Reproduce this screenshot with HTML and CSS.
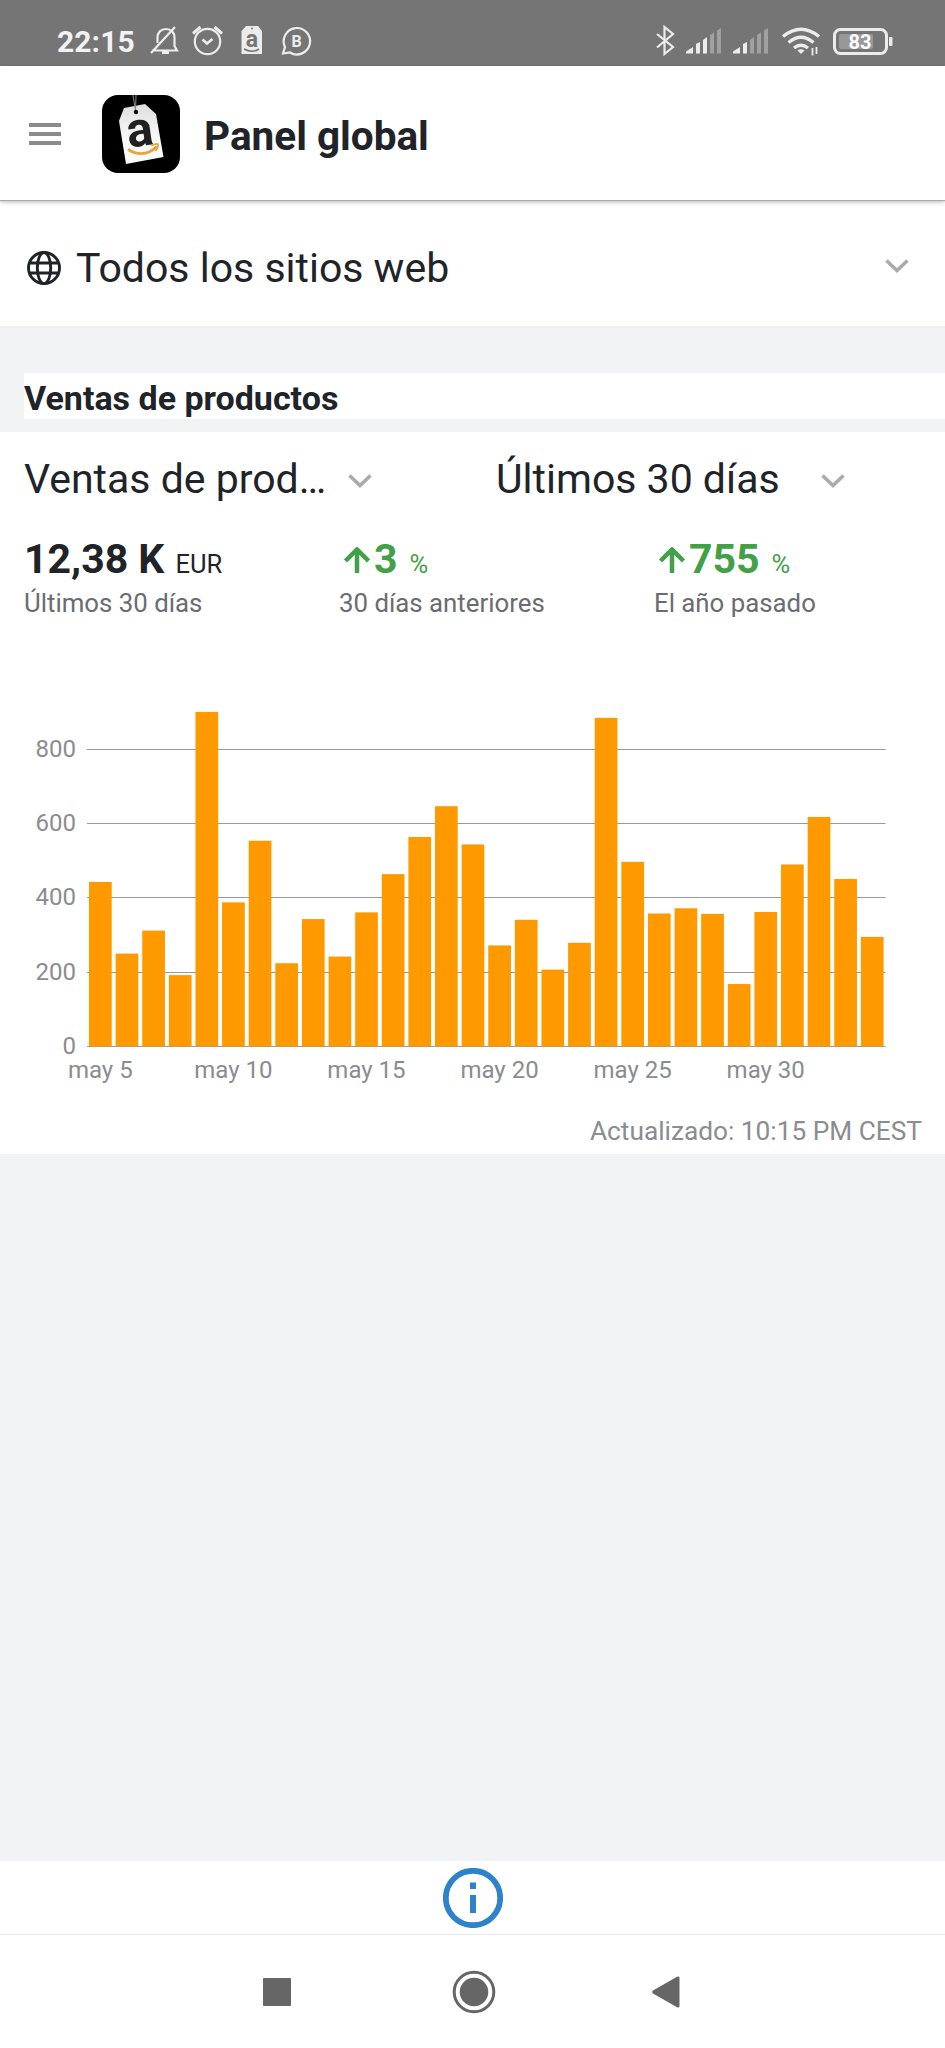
FILE: index.html
```html
<!DOCTYPE html>
<html lang="es">

<head>
    <meta charset="UTF-8">
    <title>Panel global</title>
    <link rel="stylesheet" href="styles.css">
</head>

<body>
    <div class="status-bar">
        <span class="clock">22:15</span>
        <svg class="status-left" width="170" height="40" viewBox="0 0 170 40" fill="none" stroke="#ececec" stroke-width="2.2">
            <!-- muted bell -->
            <path d="M5 27.500H30L27.500 23V14.500C27.500 9.500 24 6 19 6S10.500 9.500 10.500 14.500V20M4 30L28 4"/>
            <path d="M15 29.500H22" stroke-width="3"/>
            <!-- alarm -->
            <circle cx="60.500" cy="18.500" r="12.700"/>
            <path d="M55.500 16.500L60 20.500L65.500 16" stroke-width="2.600"/>
            <path d="M46 10.500L53.500 4M67.500 4L75 10.500" stroke-width="3"/>
            <!-- tag -->
            <path d="M94.500 31V8L99 3H111L115 8V31Z" fill="#ececec" stroke="none"/>
            <circle cx="105" cy="5.500" r="1" fill="#757575" stroke="none"/>
            <text class="tag-letter-small" x="104.800" y="23.500">a</text>
            <path d="M97 26Q105 30.500 112 26" stroke="#757575" stroke-width="1.500"/>
            <!-- business chat -->
            <path d="M136 30.500L138 24A13.200 13.200 0 1 1 143 29.500Z"/>
            <text class="chat-letter" x="149.500" y="23.500">B</text>
        </svg>
        <svg class="status-right" width="245" height="40" viewBox="0 0 245 40">
            <path d="M2 11L18 24L9.500 31V4L18 11L2 24.500" fill="none" stroke="#ececec" stroke-width="2.200"/>
            <g fill="#ececec">
                <path d="M31 30.500V28.500L38 24V30.500ZM41 30.500V21L45 19V30.500ZM48 30.500V17L52 14V30.500Z"/>
                <path d="M78 30.500V28.500L85 24V30.500ZM88 30.500V21L92 19V30.500Z"/>
            </g>
            <g fill="#a0a0a0">
                <path d="M55 30.500V12L59 9.500V30.500ZM62 30.500V7.500L66 5V30.500Z"/>
                <path d="M95 30.500V17L99 14V30.500ZM102 30.500V12L106 9.500V30.500ZM109 30.500V7.500L113 5V30.500Z"/>
            </g>
            <g fill="none" stroke="#ececec" stroke-width="3.400">
                <path d="M128 13.500Q146 -1 164 13.500M133.500 19.500Q146 9 158.500 19.500M139 25Q146 19.500 153 25"/>
                <path d="M157.500 25V32.500M161.500 24V31" stroke-width="1.800"/>
            </g>
            <path d="M142.500 27.500Q146 25 149.500 27.500L146 31Z" fill="#ececec"/>
            <rect x="179.500" y="6.500" width="52" height="24" rx="6" fill="none" stroke="#ececec" stroke-width="3"/>
            <rect x="184" y="11" width="34" height="15" rx="2" fill="#989898"/>
            <rect x="234" y="14" width="3.500" height="9" rx="1" fill="#ececec"/>
            <text class="battery-level" x="205" y="26">83</text>
        </svg>
    </div>

    <div class="header">
        <div class="menu"><span></span><span></span><span></span></div>
        <svg class="logo" width="78" height="78" viewBox="0 0 78 78">
            <defs>
                <linearGradient id="paper" x1="0" y1="0" x2="0" y2="1">
                    <stop offset="0" stop-color="#dedede"/>
                    <stop offset="0.600" stop-color="#fafafa"/>
                </linearGradient>
            </defs>
            <rect width="78" height="78" rx="16"/>
            <path d="M22 13L43 9L54 19L61.500 62L24 69L17 26Z" fill="url(#paper)"/>
            <path d="M31 0L33.500 16L34 0" fill="none" stroke="#888" stroke-width="1"/>
            <circle cx="34" cy="17" r="2.200"/>
            <text class="tag-letter" x="38" y="51" transform="rotate(-8 38 38)">a</text>
            <path d="M26 54.500Q42 64 55 51.500" fill="none" stroke="#eba23a" stroke-width="2.800"/>
            <path d="M49 50.500Q57 47.500 56 50Q56 53 53.500 56" fill="none" stroke="#eba23a" stroke-width="1.800"/>
        </svg>
        <h1>Panel global</h1>
    </div>

    <div class="site-select">
        <svg width="34" height="34" viewBox="0 0 34 34" fill="none" stroke="#202328" stroke-width="2.900">
            <circle cx="17" cy="17" r="15.500"/>
            <ellipse cx="17" cy="17" rx="6.700" ry="15.500"/>
            <path d="M3 12H31M3 22H31"/>
        </svg>
        <span class="site-name">Todos los sitios web</span>
        <svg class="chevron" width="24" height="15" viewBox="0 0 24 15"><path d="M1.500 1.500L12 11.500L22.500 1.500"/></svg>
    </div>

    <h2>Ventas de productos</h2>

    <div class="card">
        <div class="filters">
            <div class="filter">
                <span class="filter-metric">Ventas de prod…</span>
                <svg class="chevron" width="24" height="15" viewBox="0 0 24 15"><path d="M1.500 1.500L12 11.500L22.500 1.500"/></svg>
            </div>
            <div class="filter">
                <span class="filter-range">Últimos 30 días</span>
                <svg class="chevron" width="24" height="15" viewBox="0 0 24 15"><path d="M1.500 1.500L12 11.500L22.500 1.500"/></svg>
            </div>
        </div>

        <div class="stats">
            <div class="stat">
                <div class="value"><b>12,38 K</b><small>EUR</small></div>
                <div class="label">Últimos 30 días</div>
            </div>
            <div class="stat">
                <div class="value up">
                    <svg width="26" height="26" viewBox="0 0 26 26"><path d="M13 26V3M1.500 14L13 2.500L24.500 14"/></svg>
                    <b>3</b><small>%</small>
                </div>
                <div class="label">30 días anteriores</div>
            </div>
            <div class="stat">
                <div class="value up">
                    <svg width="26" height="26" viewBox="0 0 26 26"><path d="M13 26V3M1.500 14L13 2.500L24.500 14"/></svg>
                    <b>755</b><small>%</small>
                </div>
                <div class="label">El año pasado</div>
            </div>
        </div>

        <svg class="chart" id="chart" width="945" height="410" viewBox="0 0 945 410"></svg>
        <div class="updated">Actualizado: 10:15 PM CEST</div>
    </div>

    <div class="info-bar">
        <svg width="60" height="60" viewBox="0 0 60 60">
            <circle cx="30" cy="30" r="27.200" fill="none" stroke="#2e83c8" stroke-width="5.800"/>
            <path d="M27 14.500H33V21H27ZM27 27H33V45H27Z" fill="#2e83c8"/>
        </svg>
    </div>

    <div class="nav-bar">
        <svg width="28" height="28" viewBox="0 0 28 28"><rect width="28" height="28" rx="1"/></svg>
        <svg width="44" height="44" viewBox="0 0 44 44">
            <circle cx="22" cy="22" r="19.800" fill="none" stroke="#666" stroke-width="3"/>
            <circle cx="22" cy="22" r="14.300"/>
        </svg>
        <svg width="28" height="32" viewBox="0 0 28 32"><path d="M1 14.500L25 0.800Q27.500 0 27.500 2V30Q27.500 32 25 31.200L1 17.500Q-0.500 16 1 14.500Z"/></svg>
    </div>

    <script>
        const sales = [
            443, 250, 312, 192, 901, 388, 554, 224, 343, 242,
            361, 464, 564, 647, 544, 272, 341, 207, 279, 885,
            497, 358, 372, 357, 168, 362, 490, 618, 451, 295
        ];
        const left = 87;
        const right = 885.5;
        const baseline = 356.4;
        const scale = 297 / 800;
        const step = (right - left) / sales.length;
        let svg = '';

        // grid and y axis
        for (let v = 0; v <= 800; v += 200) {
            const y = Math.floor(baseline - v * scale) + 0.5;
            svg += `<line class="grid" x1="${left}" x2="${right}" y1="${y}" y2="${y}"/>`;
            svg += `<text class="tick-y" x="76" y="${y + 7}">${v}</text>`;
        }

        sales.forEach((v, i) => {
            const h = v * scale;
            svg += `<rect class="bar" x="${left + i * step + 2}" y="${baseline - h}" width="22.700" height="${h}"/>`;
            // one label every five days
            if (i % 5 === 0 && i < 30) {
                svg += `<text class="tick-x" x="${left + i * step + 13.3}" y="388">may ${i + 5}</text>`;
            }
        });
        document.getElementById('chart').innerHTML = svg;
    </script>
</body>

</html>
```
FILE: styles.css
```css
* {
    box-sizing: border-box;
}

body {
    margin: 0;
    min-height: 2048px;
    display: flex;
    flex-direction: column;
    background: #f2f3f5;
    color: #202328;
    font-family: Roboto, "Liberation Sans", sans-serif;
}

svg {
    display: block;
    flex: none;
}

.status-bar {
    height: 66px;
    padding: 18px 45px 0 57px;
    display: flex;
    background: #757575;
}

.clock {
    width: 90px;
    padding-top: 6px;
    color: #f2f2f2;
    font-size: 30px;
    font-weight: 700;
    line-height: 36px;
    white-space: nowrap;
    letter-spacing: 0.1px;
}

.status-left {
    margin-top: 5px;
}

.status-right {
    margin: 5px 0 0 auto;
}

.status-bar text {
    font-weight: 700;
    text-anchor: middle;
    stroke: none;
}

.tag-letter-small {
    font-size: 23px;
    fill: #757575;
}

.chat-letter {
    font-size: 16px;
    fill: #ececec;
}

.battery-level {
    font-size: 20px;
    fill: #fff;
}

.header {
    height: 134px;
    padding-left: 29px;
    display: flex;
    align-items: center;
    background: #fff;
    box-shadow: 0 1px 1px #aaa, 0 2px 5px rgba(0,0,0,0.25);
    z-index: 1;
}

.menu {
    width: 32px;
    display: flex;
    flex-direction: column;
    gap: 5px;
    margin-top: 2px;
}

.menu span {
    height: 4px;
    background: #8b8b8b;
}

.logo {
    margin: 2px 24px 0 41px;
}

.tag-letter {
    font-size: 49px;
    font-weight: 700;
    text-anchor: middle;
    fill: #202020;
}

h1 {
    margin: 6px 0 0;
    font-size: 40.5px;
    font-weight: 700;
    line-height: 48px;
}

.site-select {
    height: 126px;
    padding: 10px 36px 0 27px;
    display: flex;
    align-items: center;
    background: #fff;
}

.site-name {
    flex: 1;
    margin-left: 15px;
    font-size: 41px;
}

.site-select .chevron {
    margin-top: -4px;
}

.chevron {
    fill: none;
    stroke: #ababab;
    stroke-width: 3.6;
}

h2 {
    height: 46px;
    margin: 47px 0 13px 24px;
    padding-top: 4px;
    background: #fff;
    font-size: 34px;
    font-weight: 700;
    line-height: 42px;
}

.card {
    height: 722px;
    padding-top: 23px;
    background: #fff;
}

.filters {
    padding-left: 24px;
    display: grid;
    grid-template-columns: 472px 1fr;
}

.filter {
    display: flex;
    align-items: center;
    font-size: 41px;
    line-height: 48px;
    white-space: nowrap;
}

.filter-metric {
    width: 324px;
}

.filter-range {
    width: 325px;
}

.filter .chevron {
    margin-top: 4px;
}

.stats {
    padding: 32px 0 0 24px;
    display: grid;
    grid-template-columns: 315px 315px 1fr;
}

.value {
    height: 48px;
    display: flex;
    align-items: baseline;
    font-size: 41px;
    line-height: 48px;
}

.value small {
    margin-left: 11px;
    font-size: 25.5px;
}

.value svg {
    margin: 0 4px 0 5px;
    fill: none;
    stroke: #43a047;
    stroke-width: 4.5;
}

.up {
    color: #43a047;
}

.up small {
    margin-left: 12px;
}

.label {
    margin-top: 5px;
    color: #6a6c70;
    font-size: 25.8px;
    line-height: 30px;
}

.chart {
    margin-top: 72px;
}

.grid {
    stroke: #999;
}

.bar {
    fill: #ff9900;
}

.chart text {
    fill: #8a8c90;
    font-size: 24px;
}

.tick-y {
    text-anchor: end;
}

.tick-x {
    text-anchor: middle;
}

.updated {
    margin: 16px 23px 0 0;
    color: #8a8c90;
    font-size: 26.25px;
    line-height: 30px;
    text-align: right;
}

.info-bar {
    height: 74px;
    margin-top: auto;
    display: flex;
    align-items: center;
    justify-content: center;
    background: #fff;
    border-bottom: 1px solid #ececec;
}

.nav-bar {
    height: 113px;
    padding-left: 263px;
    display: flex;
    align-items: center;
    gap: 161px;
    background: #fff;
    fill: #666;
}

.nav-bar svg:last-child {
    margin-left: -5px;
}
```
